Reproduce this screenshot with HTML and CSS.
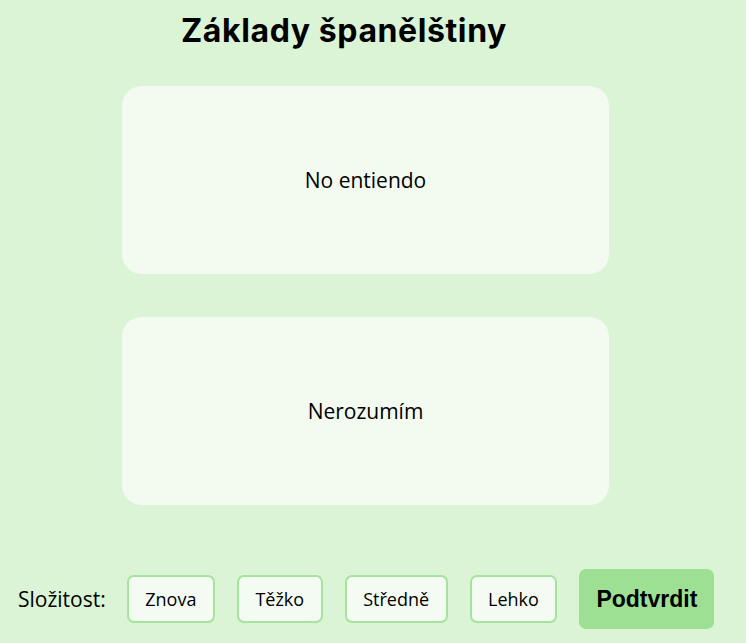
FILE: index.html
```html
<!DOCTYPE html>
<html lang="cs">
<head>
<meta charset="utf-8">
<link rel="stylesheet" href="styles.css">
</head>
<body>
<div class="app">
  <h1 class="title">Základy španělštiny</h1>
  <div class="cards">
    <div class="card">No entiendo</div>
    <div class="card">Nerozumím</div>
  </div>
  <div class="controls">
    <span class="label">Složitost:</span>
    <button class="opt">Znova</button>
    <button class="opt">Těžko</button>
    <button class="opt">Středně</button>
    <button class="opt">Lehko</button>
    <button class="confirm">Podtvrdit</button>
  </div>
</div>
</body>
</html>
```
FILE: styles.css
```css
html, body {
  margin: 0;
  padding: 0;
  background: #dbf4d6;
  height: 100%;
}
.app {
  width: 746px;
  height: 643px;
  font-family: "Open Sans", sans-serif;
  color: #000;
}
.title {
  margin: 0;
  padding: 9px 58px 0 0;
  text-align: center;
  font-family: Inter, sans-serif;
  font-weight: 700;
  font-size: 32px;
  line-height: 43px;
  letter-spacing: 0.6px;
}
.cards {
  display: flex;
  flex-direction: column;
  gap: 43px;
  padding: 34px 0 0 122px;
}
.card {
  width: 487px;
  height: 188px;
  background: #f3fbf1;
  border-radius: 20px;
  display: flex;
  align-items: center;
  justify-content: center;
  font-size: 21px;
}
.controls {
  display: flex;
  align-items: center;
  gap: 22px;
  padding: 64px 0 0 18px;
}
.label {
  font-size: 21px;
  margin-right: -1px;
}
.opt {
  height: 48px;
  padding: 0 16.5px;
  background: #f4fbf2;
  border: 2px solid #a6e39c;
  border-radius: 7px;
  font-family: "Open Sans", sans-serif;
  font-size: 18px;
  color: #000;
}
.confirm {
  height: 60px;
  width: 135px;
  background: #9de093;
  border: none;
  border-radius: 7px;
  font-family: "Liberation Sans", Arial, sans-serif;
  font-weight: 700;
  font-size: 23px;
  color: #000;
}
```
